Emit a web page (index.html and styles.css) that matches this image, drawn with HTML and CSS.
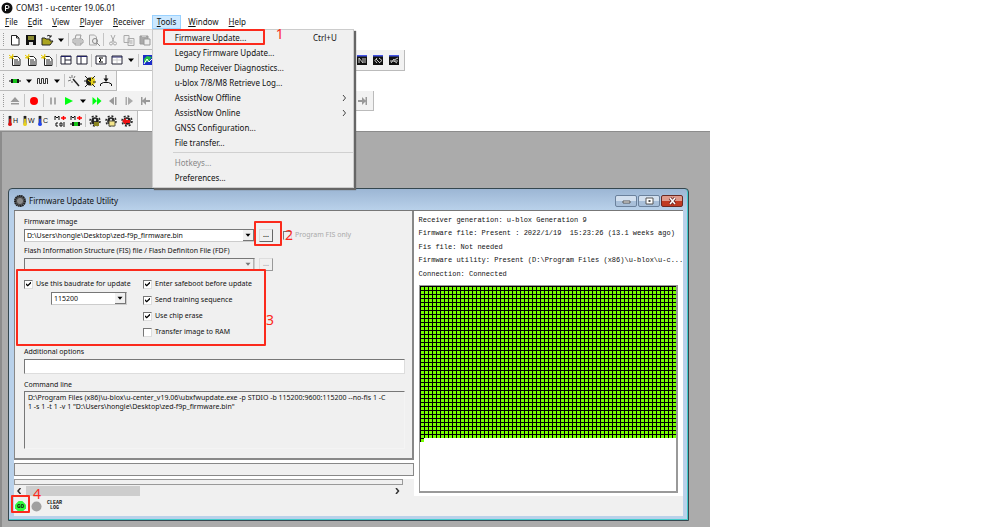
FILE: index.html
```html
<!DOCTYPE html>
<html lang="en">
<head>
<meta charset="utf-8">
<title>COM31 - u-center 19.06.01</title>
<link rel="stylesheet" href="styles.css">
</head>
<body>
<svg class="defs" aria-hidden="true">
  <symbol id="dd" viewBox="0 0 12 12"><path d="M3 4.500h6l-3 3.500z" fill="#000"/></symbol>
  <symbol id="new" viewBox="0 0 12 12"><path d="M2.500 1.500h5l2.500 2.500v7h-7.500zM7.500 1.500v2.500h2.500" fill="#fff" stroke="#222"/></symbol>
  <symbol id="newy" viewBox="0 0 12 12"><path d="M3.500 2.500h5l2.500 2.500v6.500h-7.500z" fill="#fff" stroke="#222"/><path d="M5 6h4M5 8h5M5 10h5" stroke="#222"/><path d="M0 1l5 4M4 0l-2 5M0 4l5-2" stroke="#e6c800"/></symbol>
  <symbol id="save" viewBox="0 0 12 12"><path d="M1 1h10v10h-10z" fill="#111"/><path d="M3 2h6v4h-6z" fill="#8a8a30"/><path d="M4 8h4v3h-4z" fill="#ddd"/></symbol>
  <symbol id="open" viewBox="0 0 12 12"><path d="M1 10V4h3l1 1h4v2h3l-3 4H1z" fill="#aaa420" stroke="#222"/><path d="M6 2q2-2 4 1M10 1v2H8" fill="none" stroke="#222"/></symbol>
  <symbol id="print" viewBox="0 0 12 12"><path d="M3 5l1-4h5l-1 4M1 5h9l1 1v3H1zM3 9v2h6V9M2 7h8" fill="none" stroke="#999"/></symbol>
  <symbol id="preview" viewBox="0 0 12 12"><path d="M1.500 1h5l2 2v8h-7z" fill="#eee" stroke="#aaa"/><circle cx="7" cy="7" r="2.500" fill="none" stroke="#888"/><path d="M9 9l3 3" stroke="#888"/></symbol>
  <symbol id="cut" viewBox="0 0 12 12"><path d="M4 1l3 7M8 1L5 8" stroke="#aaa"/><circle cx="4" cy="9.500" r="1.500" fill="none" stroke="#aaa"/><circle cx="8" cy="9.500" r="1.500" fill="none" stroke="#aaa"/></symbol>
  <symbol id="copy" viewBox="0 0 12 12"><path d="M1 1.500h5v7H1zM5 4.500h6v7H5z" fill="#eee" stroke="#aaa"/><path d="M6.500 7h3M6.500 9h3" stroke="#aaa"/></symbol>
  <symbol id="paste" viewBox="0 0 12 12"><path d="M1 2h8v8H1z" fill="#aaa" stroke="#999"/><path d="M5 5h6v6H5z" fill="#eee" stroke="#999"/><path d="M3 1h4v2H3z" fill="#ccc"/></symbol>
  <symbol id="pane1" viewBox="0 0 12 12"><path d="M1 2h10v8H1zM5 2v8M5 6h6" fill="#fff" stroke="#223"/><path d="M1 2.500h10" stroke="#226"/></symbol>
  <symbol id="pane2" viewBox="0 0 12 12"><path d="M1 2h10v8H1zM5 3v7" fill="#fff" stroke="#223"/><path d="M1 2.500h10" stroke="#226"/></symbol>
  <symbol id="sigma" viewBox="0 0 12 12"><path d="M1 2h10v8H1z" fill="#fff" stroke="#223"/><path d="M8 4H4l2 2-2 2h4" fill="none" stroke="#000"/></symbol>
  <symbol id="table" viewBox="0 0 12 12"><path d="M1 2h10v8H1z" fill="#fff" stroke="#223"/><path d="M1 3h10" stroke="#226"/><path d="M2 6h8M6 4v5" stroke="#ccc"/></symbol>
  <symbol id="chart" viewBox="0 0 12 12"><path d="M1 1h10v10H1z" fill="#1c2cc8"/><path d="M2 9V5l3-3 5 1-3 4z" fill="#22c04a"/><path d="M2 10l3-5 2 3 4-4" stroke="#fff" fill="none"/></symbol>
  <symbol id="scope1" viewBox="0 0 12 12"><path d="M1 1h10v10H1z" fill="#111"/><path d="M1 1h10v1.500H1z" fill="#4454e6"/><path d="M3 9V4l4 5V4M9 4v5" stroke="#ccc" fill="none"/></symbol>
  <symbol id="scope2" viewBox="0 0 12 12"><path d="M1 1h10v10H1z" fill="#111"/><path d="M1 1h10v1.500H1z" fill="#4454e6"/><path d="M5 4L3 6.500 5 9M7 4l3 2.500L7 9M4 5l4 4" stroke="#ccc" fill="none"/></symbol>
  <symbol id="scope3" viewBox="0 0 12 12"><path d="M1 1h10v10H1z" fill="#111"/><path d="M1 1h10v1.500H1z" fill="#4454e6"/><path d="M2 7h8M3 9l3-4M6 6l4-2M6 7l3 2" stroke="#ccc" fill="none"/></symbol>
  <symbol id="plug" viewBox="0 0 12 12"><path d="M0 6h12" stroke="#111"/><path d="M2 4h8v4H2z" fill="#111"/><path d="M4 4h4v4H4z" fill="#16c21a"/></symbol>
  <symbol id="wave" viewBox="0 0 12 12"><path d="M.5 9V3.500h2V8.500h2V3.500h2V8.500h2V3.500h2V9" fill="none" stroke="#333"/></symbol>
  <symbol id="wand" viewBox="0 0 12 12"><path d="M5 4l6 7" stroke="#222" stroke-width="1.500"/><path d="M4 0v3M1 2l2 1M0 6l3-1M7 1L6 3M4 6v2" stroke="#777"/></symbol>
  <symbol id="bug" viewBox="0 0 12 12"><circle cx="6" cy="6.500" r="4" fill="#1b1b12"/><path d="M7 2a4 4 0 0 1 0 8.500z" fill="#e6d21a"/><path d="M1 1l3 3M11 1L8 4M0 6h3M9 7h3M1 12l3-3M11 12L8 9" stroke="#222"/><path d="M4 5l4 3" stroke="#e6d21a"/></symbol>
  <symbol id="tap" viewBox="0 0 12 12"><path d="M6 0v5M.5 11V9l3-1.500h5l3 1.500v2" fill="none" stroke="#111"/><path d="M3.500 3.500h5L6 7z" fill="#111"/></symbol>
  <symbol id="eject" viewBox="0 0 12 12"><path d="M6 2l4.500 5h-9zM2 8h8v1.500H2z" fill="#999"/></symbol>
  <symbol id="rec" viewBox="0 0 12 12"><circle cx="6" cy="6" r="4" fill="#f00"/></symbol>
  <symbol id="pause" viewBox="0 0 12 12"><path d="M3 2.500h2v7H3zM7 2.500h2v7H7z" fill="#aaa"/></symbol>
  <symbol id="play" viewBox="0 0 12 12"><path d="M2 2l8 4-8 4z" fill="#0f1"/></symbol>
  <symbol id="ff" viewBox="0 0 12 12"><path d="M1.500 2L6 6l-4.500 4zM6 2l4.500 4L6 10z" fill="#0f1"/></symbol>
  <symbol id="back" viewBox="0 0 12 12"><path d="M7 2v8L2 6zM8 2h1.500v8H8z" fill="#999"/></symbol>
  <symbol id="fwd" viewBox="0 0 12 12"><path d="M5 2v8l5-4zM2.500 2H4v8H2.500z" fill="#aaa"/></symbol>
  <symbol id="first" viewBox="0 0 12 12"><path d="M2 2h1.500v8H2zM3 6l4-4v3h4v2H7v3z" fill="#999"/></symbol>
  <symbol id="last" viewBox="0 0 12 12"><path d="M10 2H8.500v8H10zM9 6L5 2v3H1v2h4v3z" fill="#999"/></symbol>
  <symbol id="thermo" viewBox="0 0 6 12"><path d="M3 1v9" stroke="#222" stroke-width="3"/><path d="M3 4v6" stroke="currentColor" stroke-width="2"/><circle cx="3" cy="10" r="2" fill="currentColor"/></symbol>
  <symbol id="mcold" viewBox="0 0 12 12"><path d="M1 5V1l2 2 2-2v4M4 8H2v3h2M6 8h2v3H6zM10 7v5" fill="none" stroke="#111"/><path d="M7 3h5M9.500 1v4" stroke="#f00" stroke-width="1.500"/></symbol>
  <symbol id="mplug" viewBox="0 0 12 12"><path d="M1 5V1l2 2 2-2v4M0 9h12" fill="none" stroke="#111"/><path d="M2 7h8v4H2z" fill="#111"/><path d="M4 7h4v4H4z" fill="#16c21a"/><path d="M7 3h5M9.500 1v4" stroke="#f00" stroke-width="1.500"/></symbol>
  <symbol id="gear" viewBox="0 0 12 12"><circle cx="6" cy="6" r="3.800" fill="#222"/><circle cx="6" cy="6" r="5" fill="none" stroke="#222" stroke-width="1.500" stroke-dasharray="2 1.900"/><circle cx="6" cy="5" r="1.200" fill="#ddd"/></symbol>
  <symbol id="chip" viewBox="0 0 12 12"><circle cx="6" cy="6" r="5" fill="#777" stroke="#222" stroke-width="2" stroke-dasharray="1.600 .4"/><circle cx="6" cy="6" r="3.600" fill="#8b8b8b" stroke="#444"/></symbol>
</svg>

<main class="app">
  <header class="caption">
    <svg class="logo" viewBox="0 0 12 12"><circle cx="6" cy="6" r="5.500" fill="#111"/><path d="M4.500 9V3.500h2a1.500 1.500 0 0 1 0 3h-2" fill="none" stroke="#fff"/></svg>
    <span>COM31 - u-center 19.06.01</span>
  </header>

  <nav class="menubar">
    <button><u>F</u>ile</button><button><u>E</u>dit</button><button><u>V</u>iew</button><button><u>P</u>layer</button><button><u>R</u>eceiver</button>
    <div class="menu-host">
      <button class="active"><u>T</u>ools</button>
      <div class="menu">
        <button>Firmware Update...<kbd>Ctrl+U</kbd></button>
        <button>Legacy Firmware Update...</button>
        <button>Dump Receiver Diagnostics...</button>
        <button>u-blox 7/8/M8 Retrieve Log...</button>
        <button>AssistNow Offline<svg class="chev" viewBox="0 0 6 6"><path d="M2 0l2.500 3L2 6" fill="none" stroke="#444"/></svg></button>
        <button>AssistNow Online<svg class="chev" viewBox="0 0 6 6"><path d="M2 0l2.500 3L2 6" fill="none" stroke="#444"/></svg></button>
        <button>GNSS Configuration...</button>
        <button>File transfer...</button>
        <hr>
        <button disabled>Hotkeys...</button>
        <button>Preferences...</button>
        <span class="frame frame-1"></span><span class="step step-1">1</span>
      </div>
    </div>
    <button><u>W</u>indow</button><button><u>H</u>elp</button>
  </nav>

  <div class="toolbar bar-file">
    <svg><use href="#new"/></svg><svg><use href="#save"/></svg><svg><use href="#open"/></svg><svg class="drop"><use href="#dd"/></svg><i></i>
    <svg><use href="#print"/></svg><svg><use href="#preview"/></svg><i></i><svg><use href="#cut"/></svg><svg><use href="#copy"/></svg><svg><use href="#paste"/></svg>
  </div>
  <div class="toolbar bar-view">
    <svg><use href="#newy"/></svg><svg><use href="#newy"/></svg><svg><use href="#newy"/></svg><i></i>
    <svg><use href="#pane1"/></svg><svg><use href="#pane2"/></svg><i></i><svg><use href="#sigma"/></svg><svg><use href="#table"/></svg><svg class="drop"><use href="#dd"/></svg><i></i><svg><use href="#chart"/></svg>
    <b></b><svg><use href="#scope1"/></svg><svg><use href="#scope2"/></svg><svg><use href="#scope3"/></svg>
  </div>
  <div class="toolbar">
    <svg><use href="#plug"/></svg><svg class="drop"><use href="#dd"/></svg><svg><use href="#wave"/></svg><svg class="drop"><use href="#dd"/></svg><i></i>
    <svg><use href="#wand"/></svg><svg><use href="#bug"/></svg><svg><use href="#tap"/></svg>
  </div>
  <div class="toolbar bar-play">
    <svg><use href="#eject"/></svg><i></i><svg><use href="#rec"/></svg><i></i><svg><use href="#pause"/></svg><svg><use href="#play"/></svg><svg class="drop"><use href="#dd"/></svg>
    <svg><use href="#ff"/></svg><svg><use href="#back"/></svg><svg><use href="#fwd"/></svg><svg><use href="#first"/></svg><b></b><svg><use href="#last"/></svg>
  </div>
  <div class="toolbar">
    <span class="temp hot"><svg><use href="#thermo"/></svg>H</span><span class="temp warm"><svg><use href="#thermo"/></svg>W</span><span class="temp cold"><svg><use href="#thermo"/></svg>C</span>
    <svg><use href="#mcold"/></svg><svg><use href="#mplug"/></svg><i></i>
    <svg viewBox="0 0 12 12"><use href="#gear"/><path d="M5 7h5v4H5z" fill="#8a8420"/></svg>
    <svg viewBox="0 0 12 12"><use href="#gear"/><path d="M4 6h6v5H4z" fill="#f4e58a" stroke="#554"/></svg>
    <svg viewBox="0 0 12 12"><use href="#gear"/><path d="M1 6l4-3v2h4v3H5v2z" fill="#e11"/></svg>
  </div>

  <section class="workspace">
    <div class="dialog">
      <header class="dialog-title">
        <svg class="logo"><use href="#chip"/></svg>
        <h1>Firmware Update Utility</h1>
        <div class="window-buttons">
          <button aria-label="Minimize"><svg viewBox="0 0 20 10"><path d="M7 5h7v2H7z" fill="#fff" stroke="#555"/></svg></button>
          <button aria-label="Maximize"><svg viewBox="0 0 20 10"><path d="M7 2h7v6H7z" fill="#fff" stroke="#555"/><path d="M9.500 4h2v2h-2z" fill="#555"/></svg></button>
          <button class="close" aria-label="Close"><svg viewBox="0 0 20 10"><path d="M8 2l5 6M13 2L8 8" stroke="#622" stroke-width="3"/><path d="M8 2l5 6M13 2L8 8" stroke="#fff" stroke-width="1.500"/></svg></button>
        </div>
      </header>

      <div class="dialog-body">
        <div class="left">
          <form class="panel">
            <label for="image">Firmware image</label>
            <div class="row">
              <div class="combo wide"><select id="image"><option>D:\Users\hongle\Desktop\zed-f9p_firmware.bin</option></select><svg><use href="#dd"/></svg></div>
              <div class="browse"><button type="button">...</button><span class="frame frame-2"></span><span class="step step-2">2</span></div>
              <label class="check fis"><input type="checkbox" disabled>Program FIS only</label>
            </div>
            <label for="fis">Flash Information Structure (FIS) file / Flash Definiton File (FDF)</label>
            <div class="row">
              <div class="combo wide off"><select id="fis" disabled></select><svg><use href="#dd"/></svg></div>
              <div class="browse"><button type="button" disabled>...</button></div>
            </div>
            <div class="options">
              <div class="baud">
                <label class="check"><input type="checkbox" checked>Use this baudrate for update</label>
                <div class="combo"><select aria-label="Baudrate"><option>115200</option></select><svg><use href="#dd"/></svg></div>
              </div>
              <div class="checks">
                <label class="check"><input type="checkbox" checked>Enter safeboot before update</label>
                <label class="check"><input type="checkbox" checked>Send training sequence</label>
                <label class="check"><input type="checkbox" checked>Use chip erase</label>
                <label class="check"><input type="checkbox">Transfer image to RAM</label>
              </div>
              <span class="frame frame-3"></span><span class="step step-3">3</span>
            </div>
            <label for="extra">Additional options</label>
            <input id="extra" class="text" type="text">
            <label for="cmd">Command line</label>
            <textarea id="cmd" readonly>D:\Program Files (x86)\u-blox\u-center_v19.06\ubxfwupdate.exe -p STDIO -b 115200:9600:115200 --no-fis 1 -C
1 -s 1 -t 1 -v 1 "D:\Users\hongle\Desktop\zed-f9p_firmware.bin"</textarea>
          </form>
          <div class="progress"></div>
          <div class="scroller">
            <div class="edge"></div>
            <div class="scrollbar">
              <svg class="chev" viewBox="0 0 6 6"><path d="M4.500 0L2 3l2.500 3" fill="none" stroke="#333" stroke-width="1.500"/></svg>
              <div class="thumb"></div>
              <svg class="chev end" viewBox="0 0 6 6"><path d="M2 0l2.500 3L2 6" fill="none" stroke="#333" stroke-width="1.500"/></svg>
            </div>
          </div>
        </div>

        <div class="right">
          <p>Receiver generation: u-blox Generation 9</p>
          <p>Firmware file: Present : 2022/1/19&nbsp; 15:23:26 (13.1 weeks ago)</p>
          <p>Fis file: Not needed</p>
          <p>Firmware utility: Present (D:\Program Files (x86)\u-blox\u-c...</p>
          <p>Connection: Connected</p>
          <div class="memory"><div class="cells"></div><div class="cells last"></div></div>
        </div>
      </div>

      <footer class="dialog-foot">
        <button class="go"><svg viewBox="0 0 12 12"><path d="M4 0h4l4 4v4l-4 4H4L0 8V4z" fill="#0f1c"/></svg><span>GO</span></button>
        <button aria-label="Stop"><svg viewBox="0 0 12 12"><circle cx="6" cy="6" r="5.500" fill="#a0a0a0"/></svg></button>
        <button class="clear">CLEAR<br>LOG</button>
        <span class="frame frame-4"></span><span class="step step-4">4</span>
      </footer>
    </div>
  </section>
</main>
</body>
</html>
```

FILE: styles.css
```css
* { box-sizing: border-box; }
body {
  margin: 0;
  background: #fff;
  color: #111;
  font: 8px/12px "Noto Sans", "Open Sans", sans-serif;
}
button, select, input, textarea {
  margin: 0;
  padding: 0;
  border: 0;
  border-radius: 0;
  background: none;
  color: inherit;
  font: inherit;
}
svg { display: block; }
.defs { position: absolute; width: 0; height: 0; }

.app {
  display: flex;
  flex-direction: column;
  width: 71%;
  min-height: 100vh;
}
.caption {
  display: flex;
  align-items: center;
  gap: 3px;
  height: 15px;
  padding-left: 1px;
}
.logo { width: 12px; height: 12px; }

/* Menu bar and the open Tools menu */
.menubar { display: flex; height: 14px; }
.menubar > button, .menu-host > button { height: 14px; padding: 0 5px; }
.menu-host { position: relative; margin: 0 2px; }
.menu-host > .active { background: #cce8ff; outline: 1px solid #99d1ff; outline-offset: -1px; }
.menu {
  position: absolute;
  z-index: 5;
  top: 14px;
  left: 0;
  display: flex;
  flex-direction: column;
  width: 202px;
  padding: 0 2px 2px;
  border: 1px solid #ccc;
  background: #f0f0f0;
  box-shadow: 2px 2px 1px #666;
}
.menu button {
  display: flex;
  align-items: center;
  justify-content: space-between;
  height: 15px;
  padding: 0 4px 0 20px;
}
.menu button:disabled { color: #888; }
.menu kbd { padding-right: 10px; font: inherit; }
.menu hr { width: 180px; margin: 2px 0 2px 18px; border: 0; border-top: 1px solid #d0d0d0; }
.chev { width: 6px; height: 6px; }

/* Toolbars */
.toolbar {
  display: flex;
  align-items: center;
  align-self: flex-start;
  height: 20px;
  padding: 0 2px 0 3px;
  border: solid #bbb;
  border-width: 0 1px 1px 0;
  background: #f2f2f2;
}
.toolbar::before { content: ""; width: 3px; height: 13px; border-left: 1px dotted #999; }
.toolbar > svg { width: 16px; height: 12px; }
.toolbar > .drop { width: 12px; }
.toolbar > i { width: 1px; height: 13px; margin: 0 1px; background: #c4c4c4; }
.toolbar > b { flex: 1; }
.bar-file { width: 300px; border-top: 1px solid #ddd; height: 21px; }
.bar-view { width: 405px; height: 21px; }
.bar-play { width: 374px; }
.temp { display: flex; align-items: center; width: 15px; font: 7px/12px "Liberation Sans", sans-serif; }
.temp svg { width: 6px; height: 11px; }
.hot svg { color: #d11; }
.warm svg { color: #e8d020; }
.cold svg { color: #24e; }

/* Workspace and dialog window */
.workspace {
  position: relative;
  flex: 1;
  min-height: 396px;
  border: solid #8c8c8c;
  border-width: 1px 0 0 2px;
  background: #ababab;
}
.dialog {
  position: absolute;
  top: 56px;
  left: 6px;
  right: 21px;
  padding: 0 5px 4px;
  border: 1px solid #35474f;
  border-radius: 4px 4px 0 0;
  background: linear-gradient(#9cb6d4, #b9d1ea 21px);
  box-shadow: inset 0 -1px #4cc, inset -1px 0 #4cc;
}
.dialog-title { display: flex; align-items: center; gap: 3px; height: 21px; padding-top: 3px; }
.dialog-title h1 { flex: 1; margin: 0; font: inherit; }
.window-buttons { display: flex; gap: 1px; }
.window-buttons button { width: 22px; height: 12px; border: 1px solid #6b819c; border-radius: 2px; background: linear-gradient(#d3e0ef 50%, #a8bfd9 50%); }
.window-buttons .close { background: linear-gradient(#df9a8c 50%, #c03a22 50%); border-color: #6a2a24; }
.dialog-body { display: flex; border-top: 1px solid #777; background: #fff; }
.left { flex: 399; min-width: 0; }
.right { flex: 259; min-width: 0; padding: 2px 5px 2px 4px; border-left: 1px solid #fff; }

.panel {
  display: flex;
  flex-direction: column;
  padding: 5px 7px 9px 9px;
  border: solid #888;
  border-width: 0 2px 2px 1px;
  background: #f0f0f0;
  font: 7px/12px "Noto Sans", "Open Sans", sans-serif;
}
.row { display: flex; align-items: center; gap: 4px; height: 14px; margin-bottom: 3px; }
.combo {
  position: relative;
  width: 76px;
  height: 13px;
  border: 1px solid #777;
  border-color: #777 #ccc #ccc #777;
  background: #fff;
}
.combo.wide { width: 231px; }
.combo select { display: block; width: 100%; height: 11px; padding: 0 12px 0 2px; appearance: none; }
.combo svg {
  position: absolute;
  top: 0;
  right: 0;
  width: 11px;
  height: 11px;
  border: 1px solid #777;
  border-width: 0 1px 1px 0;
  background: #f0f0f0;
  pointer-events: none;
}
.combo.off { background: #f0f0f0; }
.combo.off svg { opacity: .5; }
.browse { position: relative; }
.browse button { display: block; width: 14px; height: 13px; border: 1px solid #777; border-color: #ddd #666 #666 #ddd; font-weight: bold; line-height: 8px; }
.browse button:disabled { color: #aaa; border-color: #ddd #999 #999 #ddd; }

.check { display: flex; align-items: center; gap: 3px; height: 12px; }
.check input { position: relative; width: 9px; height: 9px; appearance: none; border: 1px solid #777; border-color: #777 #ddd #ddd #777; background: #fff; }
.check input:checked::after { content: ""; position: absolute; inset: 1px; background: #000; clip-path: polygon(0 35%, 35% 65%, 100% 0, 100% 40%, 35% 100%, 0 70%); }
.check.fis { margin-left: 6px; color: #aaa; }
.check.fis input { background: #f0f0f0; }
.options { position: relative; display: flex; gap: 12px; margin: 4px 0 8px; }
.baud { display: flex; flex-direction: column; gap: 2px; width: 107px; white-space: nowrap; }
.baud .combo { margin-left: 27px; }
.checks { display: flex; flex-direction: column; gap: 4px; }
.text { height: 15px; margin: 1px 0 5px; border: 1px solid #777; border-color: #777 #ddd #ddd #777; background: #fff; }
textarea { height: 58px; padding: 1px 3px; border: 1px solid #777; border-color: #777 #f4f4f4 #f4f4f4 #777; line-height: 9px; resize: none; white-space: pre-wrap; overflow: hidden; }

.progress { height: 13px; margin: 3px 0; border: 1px solid #888; background: #f0f0f0; }
.scroller { padding-right: 11px; background: #f0f0f0; }
.edge { height: 6px; border: 1px solid #999; }
.scrollbar { display: flex; align-items: center; height: 11px; padding: 0 3px 0 2px; }
.thumb { width: 114px; height: 10px; margin-left: 4px; background: #cdcdcd; }
.scrollbar .end { margin-left: auto; }

.right p { margin: 0; font: 7px/14px "Liberation Mono", monospace; white-space: pre; }
.right p:nth-child(even) { line-height: 13px; }
.memory { height: 208px; margin-top: 4px; border: 1px solid #999; border-width: 1px 2px 2px 1px; }
.cells {
  height: 152px;
  background:
    linear-gradient(#000 1px, transparent 1px) 0 0 / 4px 4px,
    linear-gradient(90deg, #000 1px, #7f0 1px) 0 0 / 4px 4px;
}
.cells.last { width: 4px; height: 4px; }

.dialog-foot { position: relative; display: flex; align-items: center; gap: 5px; height: 20px; padding-left: 1px; background: #f0f0f0; }
.dialog-foot svg { width: 11px; height: 11px; }
.go { position: relative; }
.go span { position: absolute; inset: 0; text-align: center; font: bold 6px/11px "Liberation Mono", monospace; }
.clear { font: bold 5px/5px "Liberation Mono", monospace; }

/* Numbered callouts */
.frame { position: absolute; border: 2px solid #fb2a1c; border-radius: 1px; pointer-events: none; }
.step { position: absolute; z-index: 1; color: #fb2a1c; font: 14px/16px "Noto Sans", sans-serif; }
.frame-1 { top: -1px; left: 10px; width: 102px; height: 16px; }
.step-1 { top: -4px; left: 123px; }
.frame-2 { top: -8px; left: -5px; width: 28px; height: 25px; }
.step-2 { top: -2px; left: 26px; }
.frame-3 { top: -9px; left: -8px; width: 250px; height: 77px; }
.step-3 { top: 34px; left: 242px; }
.frame-4 { top: -1px; left: -3px; width: 19px; height: 18px; }
.step-4 { top: -10px; left: 19px; }
```
